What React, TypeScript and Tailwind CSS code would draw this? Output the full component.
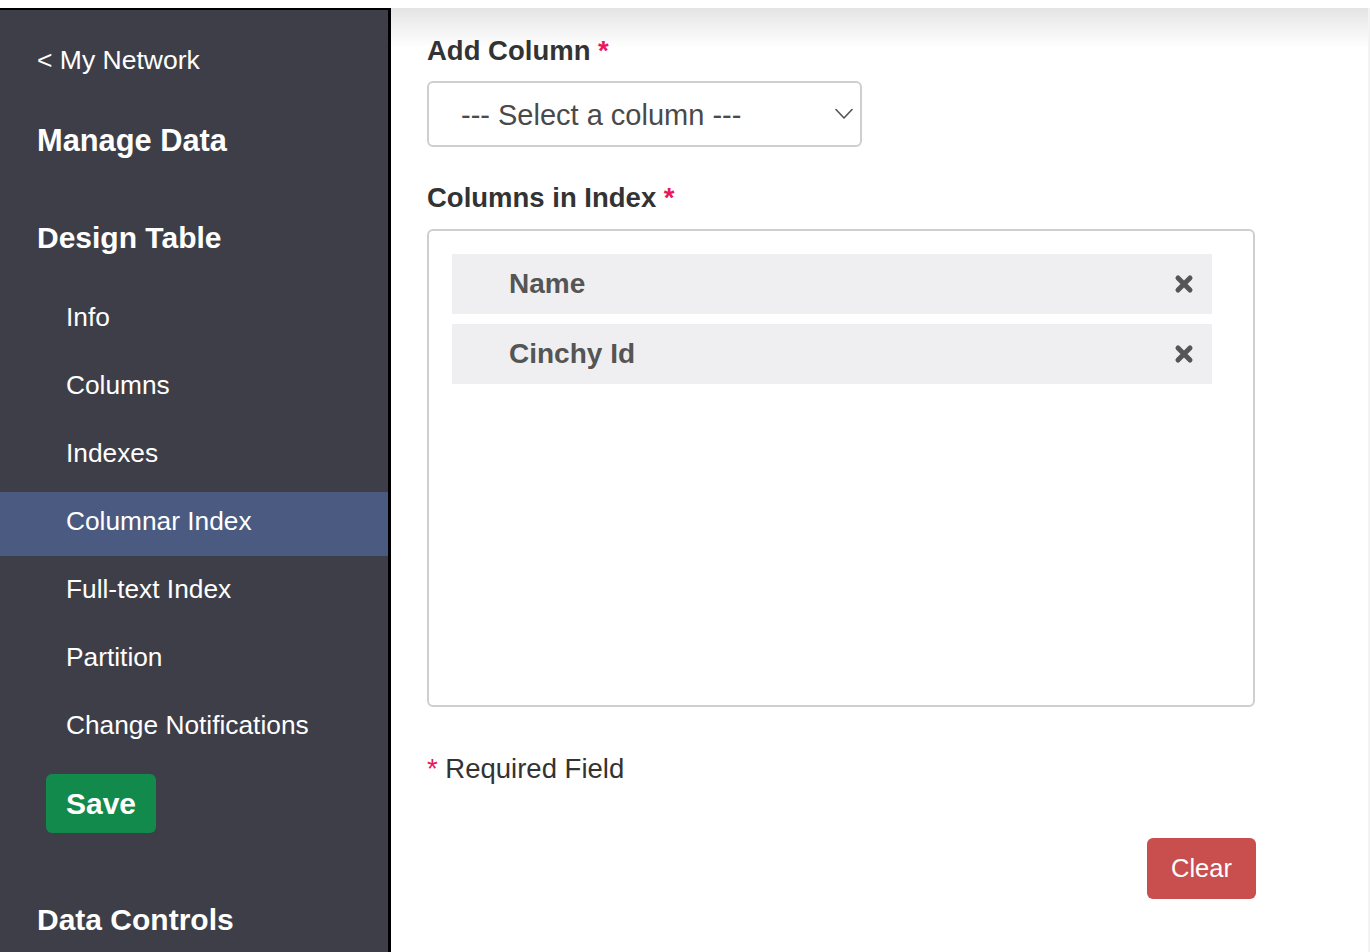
import React from "react";

const navItems = [
  "Info",
  "Columns",
  "Indexes",
  "Columnar Index",
  "Full-text Index",
  "Partition",
  "Change Notifications",
];

const indexColumns = ["Name", "Cinchy Id"];

function RemoveIcon() {
  return (
    <svg width="20" height="20" viewBox="0 0 20 20" fill="none">
      <path
        d="M4 4 L16 16 M16 4 L4 16"
        stroke="#555555"
        strokeWidth="5"
        strokeLinecap="round"
      />
    </svg>
  );
}

function Chevron() {
  return (
    <svg width="18" height="12" viewBox="0 0 18 12" fill="none">
      <polyline
        points="1,1.5 9,10 17,1.5"
        stroke="#555555"
        strokeWidth="1.6"
        strokeLinecap="round"
        strokeLinejoin="round"
      />
    </svg>
  );
}

export default function App() {
  return (
    <div className="h-[952px] overflow-hidden bg-white pt-2 font-['Liberation_Sans',Arial,sans-serif]">
      <div className="flex h-full">
        {/* Sidebar */}
        <aside className="w-[391px] shrink-0 border-t-2 border-r-[3px] border-black bg-[#3e3e48] text-white">
          <div className="pt-[34px] pl-[37px] text-[26.5px] leading-[32px]">
            &lt; My Network
          </div>
          <div className="mt-[47px] pl-[37px] text-[30.8px] leading-[36px] font-bold">
            Manage Data
          </div>
          <div className="mt-[61px] pl-[37px] text-[30px] leading-[36px] font-bold">
            Design Table
          </div>

          <nav className="mt-[32px] flex flex-col gap-1">
            {navItems.map((item) => (
              <div
                key={item}
                className={
                  "flex h-16 items-center pb-[6px] pl-[66px] text-[26.3px] leading-[32px] " +
                  (item === "Columnar Index" ? "bg-[#4a5a80]" : "")
                }
              >
                {item}
              </div>
            ))}
          </nav>

          <button className="mt-[14px] ml-[46px] flex h-[59px] w-[110px] items-center justify-center rounded-md bg-[#128a4b] text-[30px] font-bold leading-none text-white">
            Save
          </button>

          <div className="mt-[69px] pl-[37px] text-[30px] leading-[36px] font-bold">
            Data Controls
          </div>
        </aside>

        {/* Main */}
        <main className="flex-1 border-r-2 border-[#f3f3f3] bg-[linear-gradient(to_bottom,#e4e4e4,#ffffff_40px)] pt-[27px] pl-[36px] text-[#333333]">
          <div className="w-[829px]">
            <label className="block text-[27.5px] leading-[32px] font-bold">
              Add Column <span className="text-[#e8185c]">*</span>
            </label>

            <div className="mt-[14px] flex h-[66px] w-[435px] items-center justify-between rounded-md border-2 border-[#cfcfcf] bg-white pl-[32px] pr-[7px]">
              <span className="pt-[3px] text-[29px] leading-none text-[#4a4a4a]">
                --- Select a column ---
              </span>
              <Chevron />
            </div>

            <label className="mt-[35px] block text-[27.5px] leading-[32px] font-bold">
              Columns in Index <span className="text-[#e8185c]">*</span>
            </label>

            <div className="mt-[15px] flex h-[478px] w-[828px] flex-col gap-[10px] rounded-md border-2 border-[#cfcfcf] pt-[23px] pl-[23px]">
              {indexColumns.map((col) => (
                <div
                  key={col}
                  className="flex h-[60px] w-[760px] items-center justify-between bg-[#efeff1] pl-[57px] pr-[18px]"
                >
                  <span className="text-[28px] leading-none font-bold text-[#555555]">
                    {col}
                  </span>
                  <RemoveIcon />
                </div>
              ))}
            </div>

            <div className="mt-[46px] text-[27.5px] leading-[32px]">
              <span className="text-[#e8185c]">*</span> Required Field
            </div>

            <div className="mt-[53px] flex justify-end">
              <button className="flex h-[61px] w-[109px] items-center justify-center rounded-md bg-[#c94f4f] text-[25.5px] leading-none text-white">
                Clear
              </button>
            </div>
          </div>
        </main>
      </div>
    </div>
  );
}
